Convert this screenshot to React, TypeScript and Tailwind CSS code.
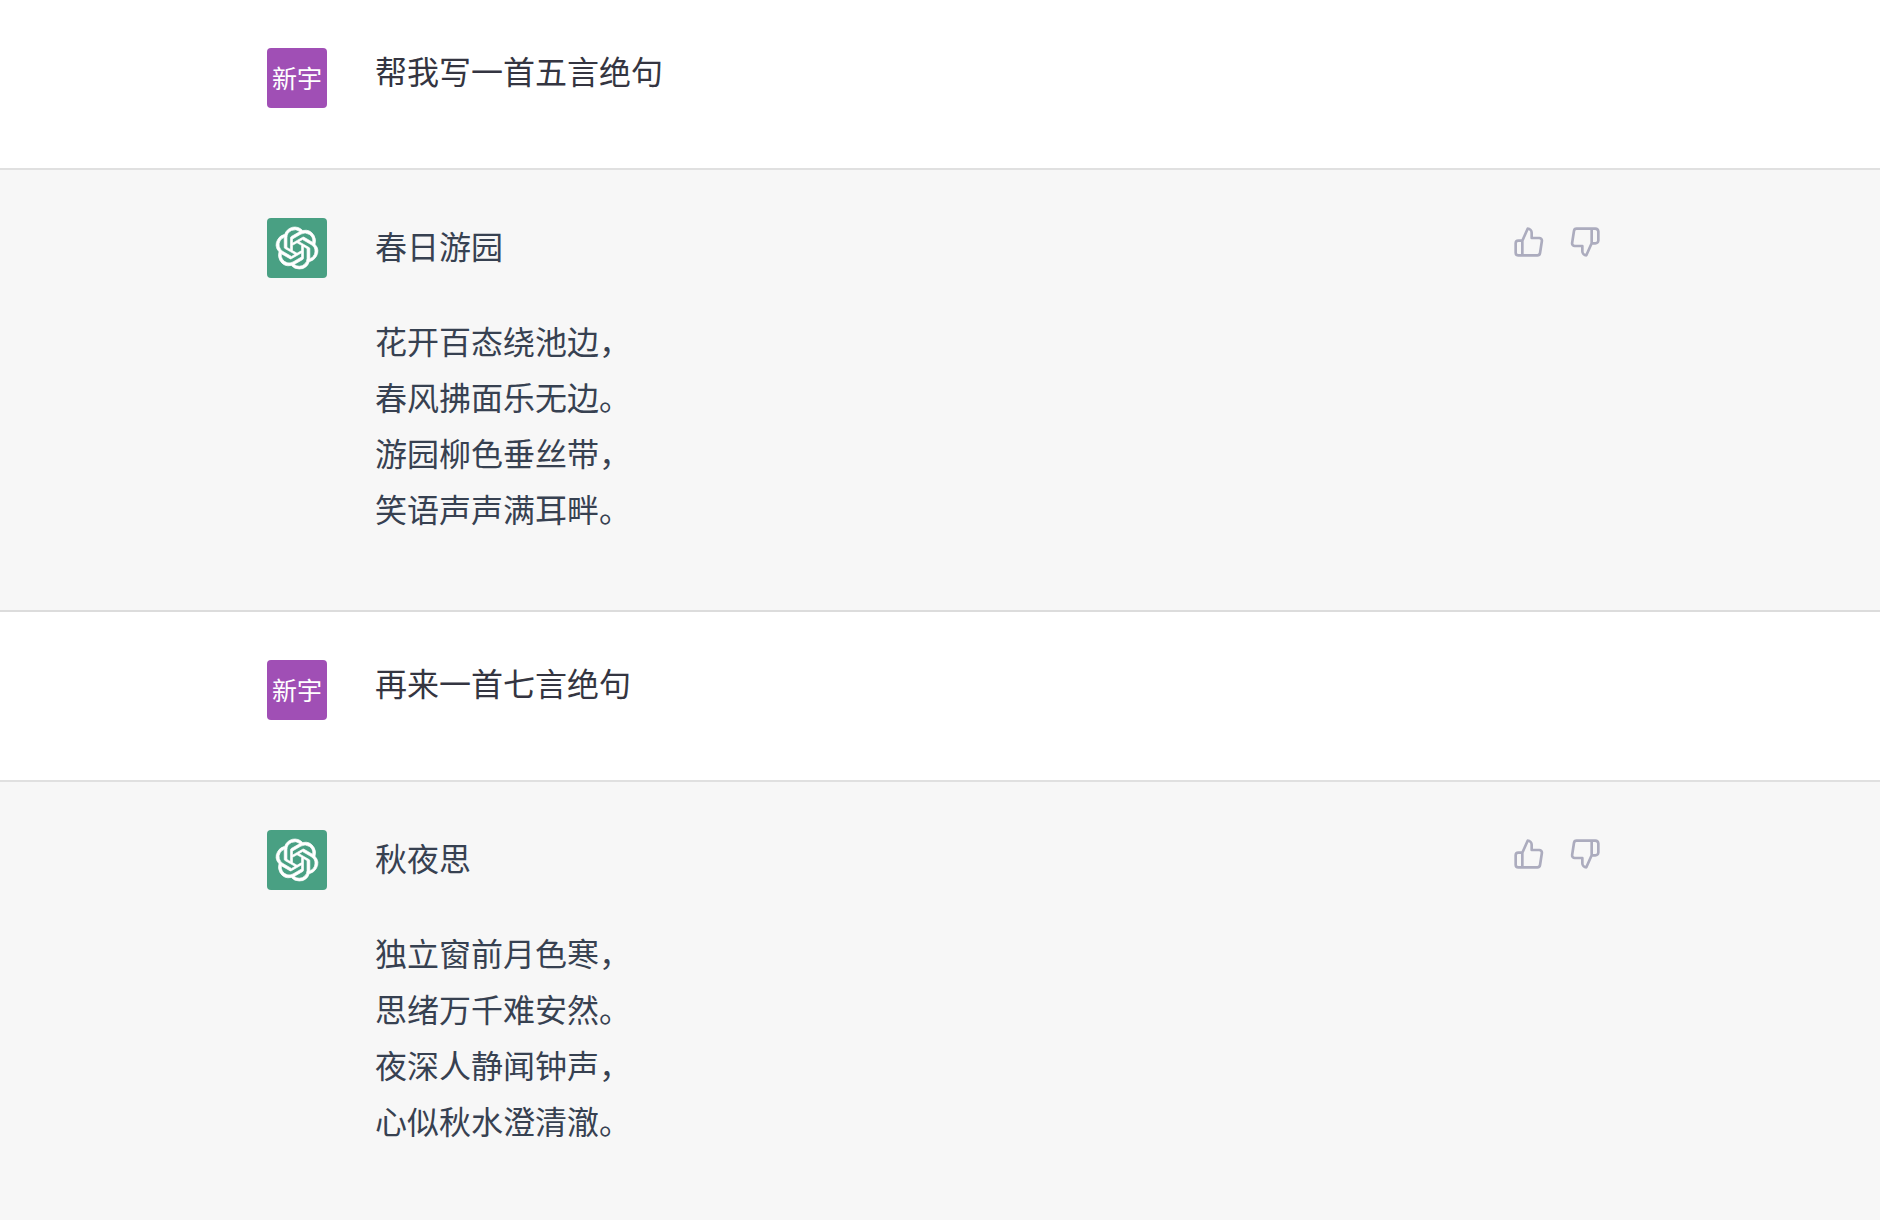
import type { ReactNode } from "react";
import { FiThumbsDown, FiThumbsUp } from "react-icons/fi";
import { SiOpenai } from "react-icons/si";

type Message =
  | { id: number; role: "user"; text: string }
  | { id: number; role: "assistant"; title: string; lines: string[] };

const USER_NAME = "新宇";

const MESSAGES: Message[] = [
  { id: 1, role: "user", text: "帮我写一首五言绝句" },
  {
    id: 2,
    role: "assistant",
    title: "春日游园",
    lines: ["花开百态绕池边，", "春风拂面乐无边。", "游园柳色垂丝带，", "笑语声声满耳畔。"],
  },
  { id: 3, role: "user", text: "再来一首七言绝句" },
  {
    id: 4,
    role: "assistant",
    title: "秋夜思",
    lines: ["独立窗前月色寒，", "思绪万千难安然。", "夜深人静闻钟声，", "心似秋水澄清澈。"],
  },
];

function Row({ children }: { children: ReactNode }) {
  return <div className="mx-auto flex w-full max-w-[1346px] items-start gap-12">{children}</div>;
}

function UserMessage({ text }: { text: string }) {
  return (
    <article className="border-b-2 border-[#e0e0e0] bg-white pt-12 pb-15">
      <Row>
        <div className="flex size-15 shrink-0 justify-center rounded-sm bg-[#a04fb5] text-[25px] leading-[58px] text-white">
          {USER_NAME}
        </div>
        <p className="min-w-0 flex-1 leading-11 text-[#343541]">{text}</p>
      </Row>
    </article>
  );
}

function AssistantMessage({ title, lines }: { title: string; lines: string[] }) {
  return (
    <article className="border-b-2 border-[#dcdcdc] bg-[#f7f7f7] pt-12 pb-[74px] last:grow last:border-b-0 last:pb-12">
      <Row>
        <div className="flex size-15 shrink-0 items-center justify-center rounded-sm bg-[#49a083] text-white">
          <SiOpenai size={42} strokeWidth={0.4} className="overflow-visible" aria-label="ChatGPT" />
        </div>
        <div className="min-w-0 flex-1 text-[#374151]">
          <p className="mb-10 leading-[54px]">{title}</p>
          <p className="leading-14">
            {lines.map((line) => (
              <span key={line} className="block">
                {line}
              </span>
            ))}
          </p>
        </div>
        <div className="flex shrink-0 gap-2 pr-1 text-[#acacbe]">
          <button type="button" aria-label="Good response" className="rounded-md p-2 hover:bg-gray-200">
            <FiThumbsUp size={32} />
          </button>
          <button type="button" aria-label="Bad response" className="rounded-md p-2 hover:bg-gray-200">
            <FiThumbsDown size={32} />
          </button>
        </div>
      </Row>
    </article>
  );
}

export default function App() {
  return (
    <main
      lang="zh-CN"
      className="flex min-h-screen flex-col bg-white font-['Noto_Sans_CJK_SC',sans-serif] text-[32px]"
    >
      {MESSAGES.map((message) =>
        message.role === "user" ? (
          <UserMessage key={message.id} text={message.text} />
        ) : (
          <AssistantMessage key={message.id} title={message.title} lines={message.lines} />
        ),
      )}
    </main>
  );
}
